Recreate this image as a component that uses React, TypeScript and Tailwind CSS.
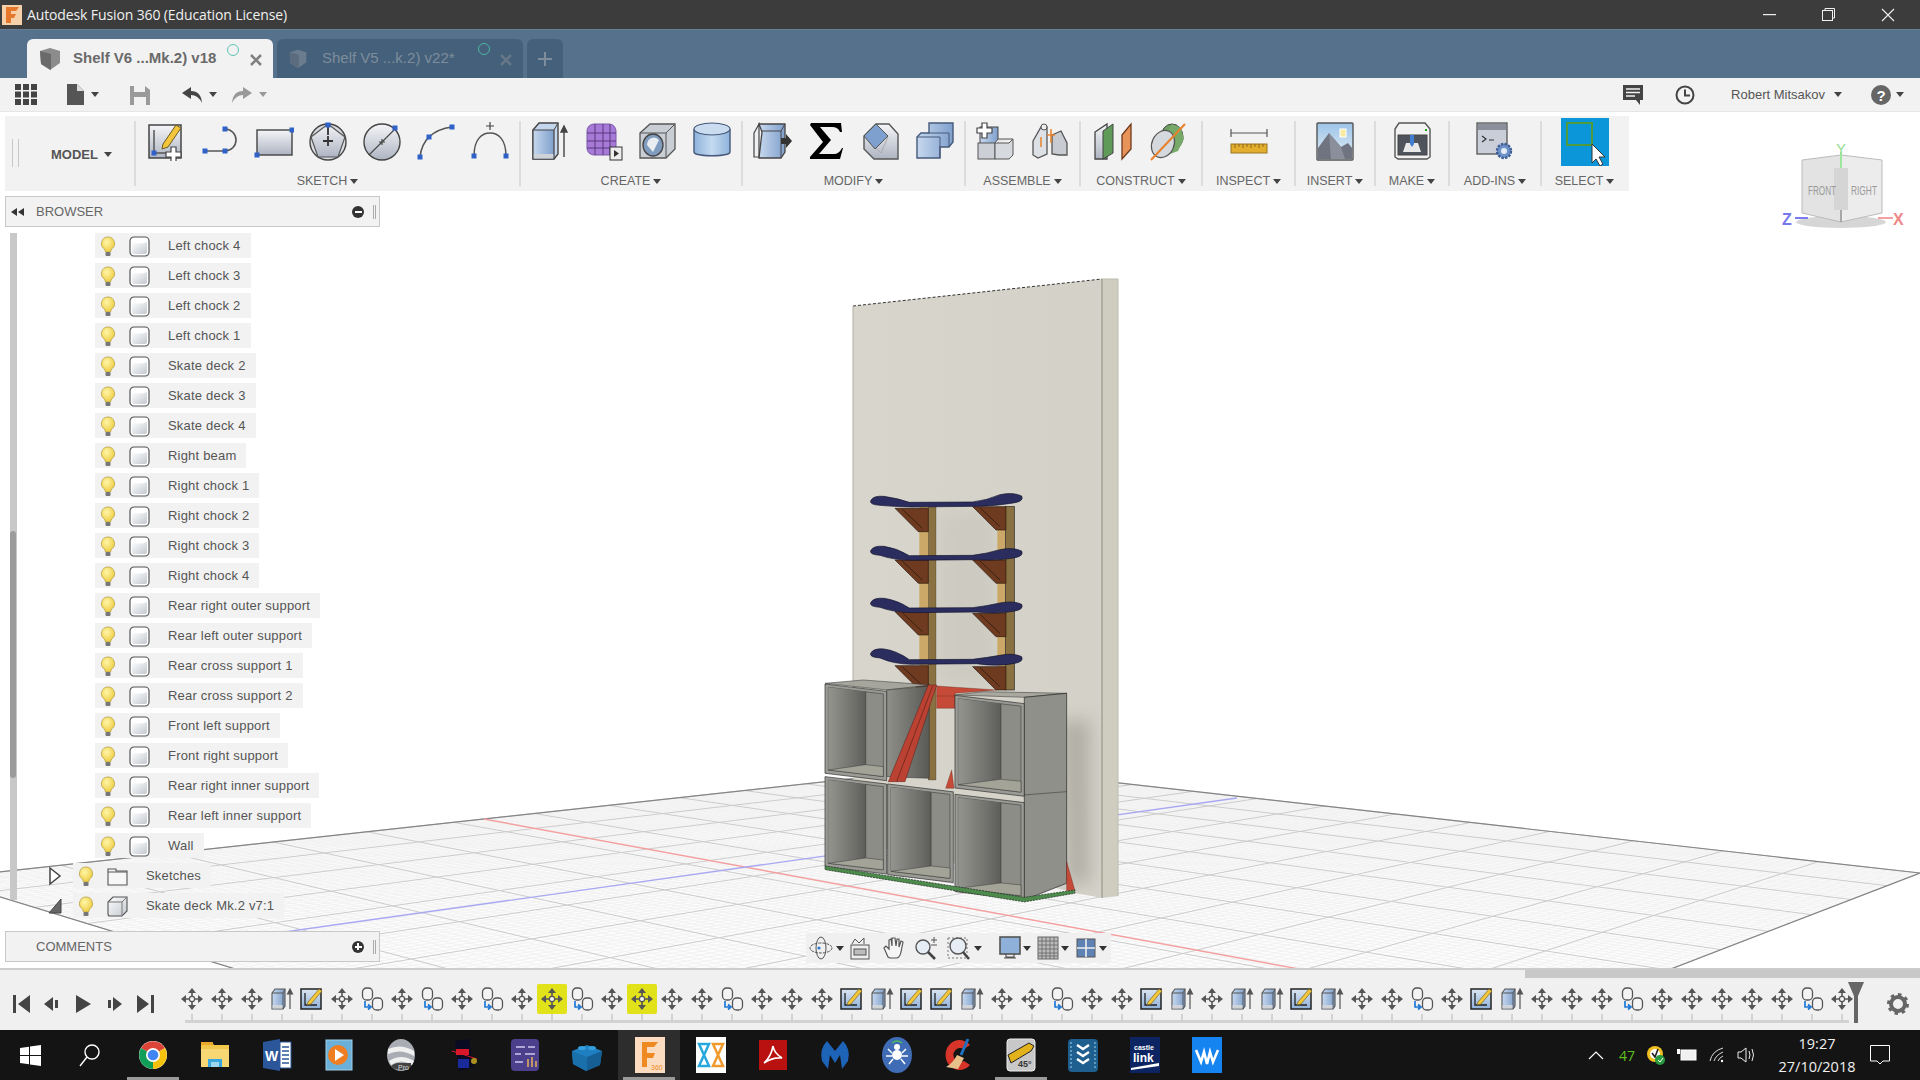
import React from "react";

const Caret = ({ c = "#555" }: { c?: string }) => (
  <svg width="8" height="5" viewBox="0 0 8 5" className="shrink-0"><path d="M0 0H8L4 5Z" fill={c} /></svg>
);

const Blue = "#2f62c8";
const Dot = ({ x, y }: { x: number; y: number }) => <rect x={x - 2.5} y={y - 2.5} width="5" height="5" fill={Blue} />;

const I40 = ({ children }: { children: React.ReactNode }) => (
  <svg width="40" height="40" viewBox="0 0 40 40" className="shrink-0">{children}</svg>
);

const icons: Record<string, React.ReactNode> = {
  sketch: (
    <I40>
      <rect x="3" y="4" width="32" height="33" fill="url(#gGray)" stroke="#444" strokeWidth="1.5" />
      <path d="M8 9V32H30" stroke="#555" fill="none" strokeWidth="1.5" />
      <path d="M17 23L30 4L35 7L22 26L16 28Z" fill="#f3c53a" stroke="#6a5a20" />
      <Dot x={8} y={32} />
      <path d="M25 26h5v5h5v5h-5v5h-5v-5h-5v-5h5z" fill="#fff" stroke="#444" strokeWidth="1.2" />
    </I40>
  ),
  line: (
    <I40>
      <path d="M5 30H25A11 11 0 0 0 25 8" fill="none" stroke="#555" strokeWidth="1.6" />
      <Dot x={5} y={30} /><Dot x={25} y={30} /><Dot x={25} y={8} />
    </I40>
  ),
  rect: (
    <I40>
      <rect x="3" y="9" width="35" height="25" fill="url(#gGray)" stroke="#444" strokeWidth="1.4" />
      <Dot x={3} y={34} /><Dot x={38} y={9} />
    </I40>
  ),
  poly: (
    <I40>
      <circle cx="20" cy="21" r="18" fill="#d8dbe2" stroke="#444" strokeWidth="1.4" />
      <path d="M20 3L37 16L30 36H10L3 16Z" fill="url(#gGray)" stroke="#555" strokeWidth="1.2" />
      <path d="M20 3V14M15 20H25M20 15V25" stroke="#333" strokeWidth="1.8" />
      <Dot x={20} y={4} />
    </I40>
  ),
  circle: (
    <I40>
      <circle cx="20" cy="21" r="18" fill="url(#gGray)" stroke="#444" strokeWidth="1.4" />
      <path d="M7 34L33 8M17 21H23M20 18V24" stroke="#444" strokeWidth="1.1" fill="none" />
      <Dot x={33} y={7} />
    </I40>
  ),
  arc: (
    <I40>
      <path d="M4 36Q7 10 36 6" fill="none" stroke="#555" strokeWidth="1.6" />
      <Dot x={4} y={36} /><Dot x={13} y={16} /><Dot x={36} y={6} />
    </I40>
  ),
  spline: (
    <I40>
      <path d="M4 35C4 18 12 12 20 12C28 12 36 18 36 35" fill="none" stroke="#555" strokeWidth="1.5" />
      <path d="M20 1V9M16 5H24" stroke="#444" strokeWidth="1.2" />
      <Dot x={4} y={35} /><Dot x={36} y={35} />
    </I40>
  ),
  extrude: (
    <I40>
      <path d="M3 9L9 2H28V33L24 38H3Z" fill="#c3d6ec" stroke="#444" strokeWidth="1.4" />
      <path d="M3 9H24V38H3Z" fill="url(#gBlue)" stroke="#444" strokeWidth="1.2" />
      <path d="M24 9L28 2" stroke="#444" />
      <rect x="3.8" y="33" width="19.5" height="4.5" fill="#cfd3d8" />
      <path d="M34 36V9M31 11L34 5L37 11Z" stroke="#444" fill="#444" strokeWidth="1.4" />
    </I40>
  ),
  form: (
    <I40>
      <rect x="3" y="3" width="29" height="31" rx="7" fill="#a77ad8" stroke="#7b58a8" />
      <path d="M3 12H32M3 20H32M3 27H32M11 3V34M19 3V34M26 3V34" stroke="#59397f" strokeWidth="1" />
      <rect x="26" y="26" width="12" height="13" fill="#eee" stroke="#333" />
      <path d="M30 29L35 32.5L30 36Z" fill="#333" />
    </I40>
  ),
  hole: (
    <I40>
      <path d="M2 12L12 3H37V28L28 37H2Z" fill="#c9cdd4" stroke="#555" strokeWidth="1.3" />
      <path d="M2 12H28V37" fill="none" stroke="#555" />
      <path d="M28 12L37 3" stroke="#555" />
      <ellipse cx="15" cy="24" rx="10" ry="11" fill="#7f9bbd" stroke="#444" strokeWidth="1.3" />
      <path d="M9 24a7 8 0 0 1 12 -5l-6 12z" fill="#e8edf2" />
    </I40>
  ),
  cyl: (
    <I40>
      <path d="M2 9V31C2 36 38 36 38 31V9Z" fill="url(#gCyl)" stroke="#46597a" strokeWidth="1.4" />
      <ellipse cx="20" cy="8" rx="18" ry="6" fill="#c9dcf0" stroke="#46597a" strokeWidth="1.2" />
    </I40>
  ),
  press: (
    <I40>
      <path d="M1 12L6 3V36H1Z" fill="#eef0f2" stroke="#444" strokeWidth="1.2" />
      <path d="M6 3H32V31L28 37H6L9 11Z" fill="url(#gBlue)" stroke="#444" strokeWidth="1.3" />
      <path d="M9 10H28V37" fill="none" stroke="#444" />
      <path d="M28 10L32 3" stroke="#444" />
      <path d="M28 17H33V13L39 20L33 27V23H28Z" fill="#333" />
    </I40>
  ),
  sigma: (
    <I40>
      <path d="M4 2H34L35 11H33Q31 6 25 6H13L24 19L12 33H27Q32 33 35 27H36L33 38H3V36L16 21L3 4Z" fill="#000" />
    </I40>
  ),
  chamfer: (
    <I40>
      <path d="M3 15L15 3H28L37 13V38H13L3 28Z" fill="url(#gGray)" stroke="#555" strokeWidth="1.4" />
      <path d="M3 15L20 32M15 3L27 16L20 32" fill="none" stroke="#aaa" />
      <path d="M15 3L27 15L14 28L3 15Z" fill="#7ea0cf" stroke="#555" />
    </I40>
  ),
  combine: (
    <I40>
      <path d="M14 2H38V21L34 26H25V37H2V16L6 12H14Z" fill="url(#gBlue)" stroke="#46597a" strokeWidth="1.4" />
      <path d="M14 12H34V26M2 16H25V37" fill="none" stroke="#46597a" />
    </I40>
  ),
  comp: (
    <I40>
      <rect x="4" y="6" width="18" height="17" fill="url(#gBlue)" stroke="#444" />
      <rect x="2" y="22" width="17" height="16" fill="#ccd0d6" stroke="#555" />
      <path d="M19 22H33L37 18V34L33 38H19Z" fill="#d6d9de" stroke="#555" />
      <path d="M19 22L22 18H37" fill="#e6e6e6" stroke="#555" />
      <path d="M6 2h5v5h5v5h-5v5h-5v-5h-5v-5h5z" fill="#fff" stroke="#444" strokeWidth="1.2" />
    </I40>
  ),
  joint: (
    <I40>
      <path d="M3 20L11 6H17V33L8 37L3 34Z" fill="#dde0e4" stroke="#555" strokeWidth="1.3" />
      <path d="M22 14L31 10L37 22V34H29L22 33Z" fill="#c8ccd2" stroke="#555" strokeWidth="1.3" />
      <circle cx="14" cy="6" r="3" fill="#eee" stroke="#555" />
      <path d="M11 16V26M21 8V22" stroke="#e8812a" strokeWidth="1.5" />
      <path d="M17 14H25" stroke="#e8812a" strokeWidth="1.4" />
    </I40>
  ),
  plane: (
    <I40>
      <path d="M1 11L13 3V38H1Z" fill="url(#gGray)" stroke="#444" strokeWidth="1.3" />
      <path d="M9 10L19 3V32L9 38Z" fill="#5f9a58" stroke="#444" />
      <path d="M28 14L37 3V28L28 38Z" fill="#e8935a" stroke="#6e3a1e" strokeWidth="1.3" />
    </I40>
  ),
  axis: (
    <I40>
      <ellipse cx="24" cy="16" rx="11" ry="13" fill="#6fa063" stroke="#444" />
      <path d="M24 3L33 7L36 18L30 30L14 36L10 28Z" fill="#77aa68" />
      <ellipse cx="15" cy="23" rx="11" ry="14" transform="rotate(25 15 23)" fill="#d5d8dc" stroke="#555" strokeWidth="1.2" />
      <path d="M3 39L37 3" stroke="#e8812a" strokeWidth="2" />
    </I40>
  ),
  ruler: (
    <I40>
      <path d="M2 12H38M2 8V16M38 8V16" stroke="#555" strokeWidth="1.2" />
      <rect x="2" y="23" width="36" height="9" fill="#e3ad2d" stroke="#9a7720" />
      <path d="M6 23v4M10 23v3M14 23v4M18 23v3M22 23v4M26 23v3M30 23v4M34 23v3" stroke="#8a6a18" />
    </I40>
  ),
  insert: (
    <I40>
      <rect x="2" y="2" width="36" height="37" rx="1" fill="url(#gSky)" stroke="#555" strokeWidth="1.4" />
      <rect x="25" y="8" width="6" height="8" fill="#f8eaa0" stroke="#fff" />
      <path d="M3 38V27L14 12L26 26L33 22L37 27V38Z" fill="#6f7480" />
      <path d="M14 12L26 26L30 38H16Z" fill="#8a8f9b" />
    </I40>
  ),
  make: (
    <I40>
      <path d="M3 8L7 2H33L38 8V36L35 38H6L3 36Z" fill="#f2f2f2" stroke="#555" strokeWidth="1.4" />
      <rect x="6" y="14" width="29" height="20" fill="#4f535b" stroke="#444" />
      <path d="M11 31L14 22H26L29 31Z" fill="#e8e8e8" />
      <path d="M18 14H22V23L20 26L18 23Z" fill="#3f7ed0" />
      <rect x="33" y="8" width="2" height="2" fill="#1aa01a" />
    </I40>
  ),
  addins: (
    <I40>
      <rect x="2" y="2" width="30" height="31" fill="#c9ced8" stroke="#555" strokeWidth="1.3" />
      <rect x="3" y="3" width="28" height="6" fill="#8a8f99" />
      <path d="M7 15L11 18L7 21M14 19H19" stroke="#333" fill="none" strokeWidth="1.2" />
      <circle cx="29" cy="30" r="7" fill="#6e93c9" stroke="#3d5f96" strokeWidth="2.4" strokeDasharray="2.5 1.2" />
      <circle cx="29" cy="30" r="3" fill="#e4ecf6" />
    </I40>
  ),
};

const groups: { label: string; w: number; icons: string[] }[] = [
  { label: "SKETCH", w: 383, icons: ["sketch", "line", "rect", "poly", "circle", "arc", "spline"] },
  { label: "CREATE", w: 220, icons: ["extrude", "form", "hole", "cyl"] },
  { label: "MODIFY", w: 221, icons: ["press", "sigma", "chamfer", "combine"] },
  { label: "ASSEMBLE", w: 113, icons: ["comp", "joint"] },
  { label: "CONSTRUCT", w: 120, icons: ["plane", "axis"] },
  { label: "INSPECT", w: 91, icons: ["ruler"] },
  { label: "INSERT", w: 78, icons: ["insert"] },
  { label: "MAKE", w: 72, icons: ["make"] },
  { label: "ADD-INS", w: 90, icons: ["addins"] },
];

const Group = ({ g }: { g: (typeof groups)[number] }) => (
  <>
    <div className="w-[2px] h-[65px] self-center bg-[#dcdcdc] shrink-0" />
    <div className="flex flex-col items-center shrink-0" {...{ style: { width: g.w } }}>
      <div className="flex justify-center gap-[14px] h-[40px] mt-[5px]">
        {g.icons.map((n, i) => <div key={i}>{icons[n]}</div>)}
      </div>
      <div className="flex items-center gap-[3px] mt-[13px] h-[15px] text-[12.5px] text-[#666]">
        {g.label}<Caret c="#444" />
      </div>
    </div>
  </>
);

const Bulb = () => (
  <svg width="16" height="22" viewBox="0 0 16 22" className="shrink-0 mt-[3px]">
    <path d="M8 1A6.5 6.5 0 0 0 4.5 13L5.5 16H10.5L11.5 13A6.5 6.5 0 0 0 8 1Z" fill="url(#gBulb)" stroke="#b8a14a" strokeWidth="0.8" />
    <rect x="5.5" y="16" width="5" height="4" rx="1" fill="#777" />
  </svg>
);

const BodyIcon = () => (
  <svg width="21" height="21" viewBox="0 0 21 21" className="shrink-0 mt-[1px]">
    <rect x="1" y="1" width="19" height="19" rx="4" fill="#fff" stroke="#555" strokeWidth="1.2" />
    <path d="M3 6Q10 9 18 6V16Q18 18 16 18H5Q3 18 3 16Z" fill="url(#gBody)" />
  </svg>
);

const Folder = () => (
  <svg width="21" height="21" viewBox="0 0 21 21" className="shrink-0 mt-[1px]">
    <path d="M1 3H9V5H20V19H1Z" fill="#f7f7f7" stroke="#555" strokeWidth="1.1" />
    <path d="M1 6H20" stroke="#555" />
  </svg>
);

const CompIcon = () => (
  <svg width="21" height="21" viewBox="0 0 21 21" className="shrink-0 mt-[1px]">
    <path d="M1 6L6 1H20V15L15 20H3Q1 20 1 18Z" fill="url(#gBody)" stroke="#555" strokeWidth="1.1" />
    <path d="M1 6H15V20M15 6L20 1" fill="none" stroke="#777" />
  </svg>
);

const items = [
  "Left chock 4", "Left chock 3", "Left chock 2", "Left chock 1", "Skate deck 2", "Skate deck 3", "Skate deck 4",
  "Right beam", "Right chock 1", "Right chock 2", "Right chock 3", "Right chock 4", "Rear right outer support",
  "Rear left outer support", "Rear cross support 1", "Rear cross support 2", "Front left support", "Front right support",
  "Rear right inner support", "Rear left inner support", "Wall",
];

const Row = ({ label, icon }: { label: string; icon: React.ReactNode }) => (
  <div className="flex items-center h-[25px] bg-[#f2f2f2] text-[13px] text-[#555] pr-[10px] w-fit">
    <div className="w-[26px] flex justify-center"><Bulb /></div>
    <div className="w-[21px] ml-[8px] flex justify-center">{icon}</div>
    <span className="ml-[18px] pt-[1px] tracking-[0.2px] whitespace-nowrap">{label}</span>
  </div>
);

/* ---------- timeline ---------- */
const Move = () => (
  <svg width="24" height="24" viewBox="0 0 24 24">
    <g fill="#555">
      <path d="M12 1L16 6H8Z" /><path d="M12 23L16 18H8Z" /><path d="M1 12L6 8V16Z" /><path d="M23 12L18 8V16Z" />
    </g>
    <path d="M12 5V9M12 15V19M5 12H9M15 12H19" stroke="#555" strokeWidth="1.6" />
    <circle cx="12" cy="12" r="2.6" fill="#f4f4f4" stroke="#555" strokeWidth="1.2" />
  </svg>
);
const JointT = () => (
  <svg width="24" height="24" viewBox="0 0 24 24">
    <rect x="2.5" y="1" width="10" height="12" rx="4" fill="#f4f4f4" stroke="#555" strokeWidth="1.3" />
    <rect x="12.5" y="11" width="10" height="12" rx="4" fill="#f4f4f4" stroke="#555" strokeWidth="1.3" />
    <path d="M5 14V20H10M8 17.5L11 20L8 22.5" stroke="#1f78d8" strokeWidth="1.7" fill="none" />
  </svg>
);
const SketchT = () => (
  <svg width="24" height="24" viewBox="0 0 24 24">
    <rect x="1" y="2" width="20" height="20" fill="url(#gBlueL)" stroke="#222" strokeWidth="1.5" />
    <path d="M5 6V18H17" stroke="#222" strokeWidth="1.3" fill="none" />
    <path d="M8 15L19 2L22 4L11 17L7 18Z" fill="#f3c53a" stroke="#7c6a22" strokeWidth="0.7" />
  </svg>
);
const ExtrudeT = () => (
  <svg width="24" height="24" viewBox="0 0 24 24">
    <path d="M2 6L5 2H15V19L13 22H2Z" fill="url(#gBlue)" stroke="#555" strokeWidth="1.1" />
    <path d="M2 6H13V22M13 6L15 2" fill="none" stroke="#555" />
    <rect x="2.5" y="18" width="10" height="3.5" fill="#d0d4d9" />
    <path d="M20 22V5M17.5 7L20 2L22.5 7Z" stroke="#555" fill="#555" strokeWidth="1.2" />
  </svg>
);
const seq = "m m m e s m j m j m j m M j m M m m j m m m s e s s e m m j m m s e m e e s e m m j m s e m m m j m m m m m j m".split(" ");
const Tl = ({ k }: { k: string }) => {
  if (k === "j") return <JointT />;
  if (k === "s") return <SketchT />;
  if (k === "e") return <ExtrudeT />;
  return <Move />;
};

/* ---------- 3D view ---------- */
function makeGrid() {
  const [x0, y0, x1, y1, x2, y2, x3, y3] = [-60, 878.5, 968, 766, 1920, 873, 1035, 1214];
  const dx1 = x1 - x2, dx2 = x3 - x2, sx = x0 - x1 + x2 - x3;
  const dy1 = y1 - y2, dy2 = y3 - y2, sy = y0 - y1 + y2 - y3;
  const den = dx1 * dy2 - dx2 * dy1;
  const g = (sx * dy2 - dx2 * sy) / den, h = (dx1 * sy - sx * dy1) / den;
  const a = x1 - x0 + g * x1, b = x3 - x0 + h * x3, c = x0;
  const d = y1 - y0 + g * y1, e = y3 - y0 + h * y3, f = y0;
  const P = (u: number, v: number) => {
    const w = g * u + h * v + 1;
    return [(a * u + b * v + c) / w, (d * u + e * v + f) / w];
  };
  const N = 130;
  const minor: string[] = [], major: string[] = [];
  for (let i = 0; i <= N; i++) {
    const t = i / N;
    const A = P(t, 0), B = P(t, 1), C = P(0, t), D = P(1, t);
    const s1 = `M${A[0].toFixed(1)} ${A[1].toFixed(1)}L${B[0].toFixed(1)} ${B[1].toFixed(1)}`;
    const s2 = `M${C[0].toFixed(1)} ${C[1].toFixed(1)}L${D[0].toFixed(1)} ${D[1].toFixed(1)}`;
    (i % 10 === 0 ? major : minor).push(s1, s2);
  }
  return { minor: minor.join(""), major: major.join(""), floor: `${x0},${y0} ${x1},${y1} ${x2},${y2} ${x3},${y3}` };
}
const grid = makeGrid();

const Deck = ({ l, m, r }: { l: number; m: number; r: number }) => (
  <path
    d={`M272 ${l}Q280 ${l - 16} 312 ${l - 13}Q350 ${l - 8} 388 ${m - 3}L578 ${m - 4}Q620 ${m - 9} 660 ${r - 11}Q700 ${r - 19} 725 ${r - 7}Q733 ${r + 9} 700 ${r + 14}Q650 ${r + 23} 590 ${m + 9}L395 ${m + 11}Q340 ${m + 10} 300 ${l + 14}Q268 ${l + 12} 272 ${l}Z`}
    fill="#2b2d5e" stroke="#14142e" strokeWidth="2"
  />
);
const Chock = ({ x, y }: { x: number; y: number }) => (
  <g>
    <path d={`M${x} ${y}H${x + 100}V${y + 70}H${x + 70}Z`} fill="#6e3a20" stroke="#2a1a10" strokeWidth="2" />
    <path d={`M${x + 22} ${y + 3}L${x + 82} ${y + 60}`} stroke="#3a2010" strokeWidth="3" />
  </g>
);
const Cell = ({ x, y, w, h }: { x: number; y: number; w: number; h: number }) => {
  const s = 0.12;
  const i = 10;
  const dr = w * s;
  const ix = x + i, iw = w - 2 * i, iy = y + i, ih = h - 2 * i;
  const bx = ix + iw * 0.68;
  return (
    <g>
      <path d={`M${x} ${y}L${x + w} ${y + dr}V${y + dr + h}L${x} ${y + h}Z`} fill="#9a9b95" stroke="#2c2c2c" strokeWidth="2" />
      <path d={`M${ix} ${iy}L${ix + iw} ${iy + iw * s}V${iy + iw * s + ih}L${ix} ${iy + ih}Z`} fill="#8c8d87" stroke="#333" strokeWidth="1.6" />
      <path d={`M${ix} ${iy}L${bx} ${iy + iw * 0.68 * s}V${iy + ih - 16}L${ix} ${iy + ih}Z`} fill="url(#gInner)" />
      <path d={`M${bx} ${iy + iw * 0.68 * s}V${iy + ih - 16}`} stroke="#333" strokeWidth="1.6" />
      <path d={`M${ix} ${iy + ih}L${bx} ${iy + ih - 16}L${ix + iw} ${iy + ih - 10}V${iy + ih + iw * s}Z`} fill="#a3a398" stroke="#333" strokeWidth="1.4" />
    </g>
  );
};

const Scene = () => (
  <svg viewBox="0 112 1920 856" width="1920" height="856" className="absolute inset-0">
    <defs>
      <filter id="soft" x="-100%" y="-50%" width="300%" height="200%"><feGaussianBlur stdDeviation="26" /></filter>
    </defs>
    <rect x="0" y="112" width="1920" height="856" fill="#fff" />
    <polygon points={grid.floor} fill="#fcfcfc" />
    <path d={grid.minor} stroke="#f2f2f2" strokeWidth="1" fill="none" />
    <path d={grid.major} stroke="#cbcbcb" strokeWidth="1" fill="none" />
    <polygon points={grid.floor} fill="none" stroke="#858585" strokeWidth="1.2" />
    <path d="M484 819L1500 1006" stroke="#f4a0a0" strokeWidth="1.4" />
    <path d="M100 958L1237 798" stroke="#a9a9f2" strokeWidth="1.4" />
    {/* wall */}
    <path d="M853 306L1102 279V898L1075 893L1025 880L853 840Z" fill="url(#gWall)" />
    <g transform="translate(780 460) scale(0.3333)">
      <path d="M840 780H930V1270H860Z" fill="#8e8c84" opacity="0.5" filter="url(#soft)" />
      <path d="M470 150H650V680H470Z" fill="#bdbbb1" opacity="0.35" filter="url(#soft)" />
    </g>
    <path d="M1102 279H1118V896L1102 898Z" fill="#cfcdc0" />
    <path d="M853 306L1102 279" stroke="#333" strokeWidth="1" strokeDasharray="3 2" />
    <path d="M1102 279V898" stroke="#8f8d80" />
    <path d="M853 306V690" stroke="#b0aea4" />
    <path d="M1102 279H1118V896" stroke="#bdbbad" fill="none" />
    <g transform="translate(780 460) scale(0.3333)">
      {/* posts */}
      <rect x="418" y="140" width="27" height="540" fill="#cba868" />
      <rect x="445" y="140" width="23" height="820" fill="#8a7142" stroke="#3a2f1a" />
      <rect x="652" y="140" width="25" height="550" fill="#cba868" />
      <rect x="677" y="140" width="26" height="550" fill="#8a7142" stroke="#222" strokeWidth="2" />
      {[[145, 140], [300, 300], [455, 460], [617, 620]].map(([a, b], i) => (
        <g key={i}><Chock x={345} y={a} /><Chock x={578} y={b} /></g>
      ))}
      <Deck l={122} m={130} r={115} />
      <Deck l={272} m={290} r={280} />
      <Deck l={428} m={447} r={440} />
      <Deck l={580} m={602} r={597} />
      {/* red braces */}
      <path d="M470 678L650 690L525 700V745H470Z" fill="#c54a38" stroke="#5a1f16" />
      <path d="M470 708H525" stroke="#5a1f16" />
      {/* boxes */}
      <path d="M135 670L250 660L450 675L320 690Z" fill="#a5a59c" stroke="#2c2c2c" strokeWidth="1.5" />
      <path d="M320 690L448 678V955L320 950Z" fill="url(#gSide)" stroke="#2c2c2c" strokeWidth="1.5" />
      <Cell x={135} y={672} w={185} h={268} />
      <Cell x={135} y={950} w={185} h={270} />
      <Cell x={323} y={972} w={197} h={272} />
      <path d="M445 675H470L375 965H325Z" fill="#bb4232" stroke="#5a1f16" strokeWidth="1.5" />
      <path d="M458 678L350 965" stroke="#5a1f16" strokeWidth="2" />
      <path d="M515 930L522 985H497Z" fill="#c54a38" stroke="#5a1f16" />
      <path d="M525 705L610 695L860 700L733 712Z" fill="#a8a89f" stroke="#2c2c2c" strokeWidth="1.5" />
      <path d="M733 712L860 700V1270L733 1320Z" fill="#8f908a" stroke="#222" strokeWidth="2" />
      <path d="M733 1005L860 995" stroke="#333" strokeWidth="1.6" />
      <Cell x={525} y={706} w={208} h={278} />
      <Cell x={525} y={1003} w={208} h={292} />
      <path d="M860 1205L885 1292H860Z" fill="#c54a38" stroke="#5a1f16" />
      <path d="M135 1218L733 1312L885 1290V1300L733 1326L135 1229Z" fill="#4c8b4c" stroke="#222" strokeWidth="2" strokeDasharray="6 3" />
    </g>
  </svg>
);

const ViewCube = () => (
  <svg width="140" height="100" viewBox="1780 135 140 100" className="absolute left-[1780px] top-[23px]">
    <ellipse cx="1841" cy="222" rx="45" ry="6" fill="#bbb" opacity="0.6" />
    <path d="M1802 160L1841 155V222L1802 213Z" fill="#e3e3e3" stroke="#bbb" />
    <path d="M1841 155L1882 160V213L1841 222Z" fill="#ececec" stroke="#bbb" />
    <path d="M1841 155V222" stroke="#999" strokeWidth="1.4" />
    <rect x="1834" y="168" width="14" height="42" fill="#d5d5d5" />
    <path d="M1841 152V168" stroke="#9de89d" strokeWidth="2" />
    <path d="M1795 218H1808" stroke="#7a7af0" strokeWidth="2" />
    <path d="M1878 218H1893" stroke="#f3a0a0" strokeWidth="2" />
    <text x="1808" y="195" fontSize="12" fill="#999" textLength="28" lengthAdjust="spacingAndGlyphs">FRONT</text>
    <text x="1851" y="195" fontSize="12" fill="#999" textLength="26" lengthAdjust="spacingAndGlyphs">RIGHT</text>
    <text x="1836" y="154" fontSize="15" fill="#8fe08f">Y</text>
    <text x="1782" y="225" fontSize="16" fontWeight="bold" fill="#7777ee">Z</text>
    <text x="1893" y="225" fontSize="16" fontWeight="bold" fill="#ee8888">X</text>
  </svg>
);

const NavIcon = ({ children, w = 24 }: { children: React.ReactNode; w?: number }) => (
  <svg width={w} height="24" viewBox={`0 0 ${w} 24`} className="shrink-0">{children}</svg>
);

const NavBar = () => (
  <div className="absolute left-[806px] bottom-[5px] w-[305px] h-[30px] bg-[#f0f0f0] flex items-center pl-[3px]">
    <div className="flex items-center w-[40px] gap-[3px]">
      <NavIcon><ellipse cx="12" cy="12" rx="5" ry="11" fill="none" stroke="#555" /><ellipse cx="12" cy="12" rx="11" ry="5" fill="none" stroke="#555" strokeDasharray="3 1" /><circle cx="10" cy="12" r="1.6" fill="#2f7ad0" /></NavIcon>
      <Caret c="#333" />
    </div>
    <div className="w-[33px]">
      <NavIcon><rect x="2" y="9" width="18" height="14" fill="#eee" stroke="#555" /><rect x="5" y="13" width="12" height="6" fill="#bbb" stroke="#555" /><path d="M3 8L6 3L10 7L15 2V8" fill="none" stroke="#555" /></NavIcon>
    </div>
    <div className="w-[32px]">
      <NavIcon><path d="M6 21L2 12L4 10L7 13V4L9 3L10 10V2H13L14 10L15 3H17L17 11L19 5L21 6L19 16Q18 21 15 22H8Z" fill="#f5f5f5" stroke="#555" strokeWidth="1.2" /></NavIcon>
    </div>
    <div className="w-[33px]">
      <NavIcon><circle cx="9" cy="11" r="7" fill="#e6edf5" stroke="#555" strokeWidth="1.4" /><path d="M14 16L21 23" stroke="#444" strokeWidth="2.6" /><path d="M20 1V7M17 4H23M17 9H23" stroke="#555" /></NavIcon>
    </div>
    <div className="flex items-center w-[51px] gap-[3px]">
      <NavIcon><rect x="1" y="2" width="19" height="20" fill="none" stroke="#777" strokeDasharray="2 2" /><circle cx="11" cy="10" r="8" fill="#e6edf5" stroke="#555" strokeWidth="1.4" /><path d="M16 16L22 23" stroke="#444" strokeWidth="2.6" /></NavIcon>
      <Caret c="#333" />
    </div>
    <div className="flex items-center w-[38px] gap-[1px]">
      <NavIcon><rect x="2" y="1" width="20" height="17" fill="#8fb0d8" stroke="#555" strokeWidth="1.6" /><path d="M8 18V21H16V18M6 22H18" stroke="#555" strokeWidth="1.2" fill="none" /></NavIcon>
      <Caret c="#333" />
    </div>
    <div className="flex items-center w-[38px] gap-[1px]">
      <NavIcon><rect x="2" y="1" width="20" height="22" fill="#bbb" stroke="#666" /><path d="M6 1V23M10 1V23M14 1V23M18 1V23M2 5H22M2 9H22M2 13H22M2 17H22M2 20H22" stroke="#666" strokeWidth="0.8" /></NavIcon>
      <Caret c="#333" />
    </div>
    <div className="flex items-center gap-[1px]">
      <NavIcon><rect x="3" y="3" width="18" height="18" fill="#5f82b5" stroke="#555" /><path d="M12 3V21M3 12H21" stroke="#eee" strokeWidth="1.6" /></NavIcon>
      <Caret c="#333" />
    </div>
  </div>
);

/* ---------- taskbar icons ---------- */
const T = ({ children }: { children: React.ReactNode }) => (
  <svg width="32" height="36" viewBox="0 0 32 36">{children}</svg>
);
const taskIcons: React.ReactNode[] = [
  <T><circle cx="16" cy="18" r="14" fill="#fff" /><path d="M16 18L4 11A14 14 0 0 1 28 11Z" fill="#db4437" /><path d="M16 18L28 11A14 14 0 0 1 16 32Z" fill="#f4c20d" /><path d="M16 18L16 32A14 14 0 0 1 4 11Z" fill="#0f9d58" /><circle cx="16" cy="18" r="7" fill="#fff" /><circle cx="16" cy="18" r="5.3" fill="#4285f4" /></T>,
  <T><path d="M2 5H13L15 8H30V30H2Z" fill="#f3c64c" /><rect x="2" y="5" width="12" height="3" fill="#e9a92b" /><path d="M2 12H30V30H2Z" fill="#f7d774" /><path d="M9 22H23V30H9Z" fill="#3aa7de" /><path d="M12 25H20V30H12Z" fill="#9ed6ef" /></T>,
  <T><path d="M2 5L19 2V34L2 31Z" fill="#2b579a" /><rect x="19" y="5" width="11" height="26" fill="#fff" stroke="#2b579a" /><path d="M21 10H28M21 14H28M21 18H28M21 22H28M21 26H28" stroke="#2b579a" strokeWidth="1.5" /><text x="4" y="24" fontSize="14" fontWeight="bold" fill="#fff" fontFamily="Liberation Sans">W</text></T>,
  <T><rect x="3" y="3" width="26" height="30" fill="#6ab0d8" stroke="#9fd0ea" /><circle cx="15" cy="18" r="10" fill="#ef7d22" /><path d="M12 12L21 18L12 24Z" fill="#fff" /></T>,
  <T><ellipse cx="16" cy="18" rx="14" ry="16" fill="#a9adb3" /><path d="M3 12Q16 6 29 14L29 19Q16 11 3 17ZM4 24Q16 16 29 24L27 28Q16 21 6 28Z" fill="#f0f0f0" /><path d="M6 30Q16 36 26 30V26H14Q8 26 6 30Z" fill="#444" /><text x="13" y="33" fontSize="7" fill="#ddd" fontFamily="Liberation Sans">Pro</text></T>,
  <T><path d="M8 4L22 2L26 30L12 34Z" fill="#0a0a22" /><rect x="9" y="12" width="13" height="6" fill="#d8182a" /><rect x="11" y="22" width="11" height="9" fill="#1a2a9a" /><path d="M5 14L30 22" stroke="#d8182a" /><circle cx="27" cy="24" r="3" fill="#a99020" /></T>,
  <T><rect x="2" y="2" width="28" height="32" rx="4" fill="#4c3f8c" /><path d="M7 10H16M19 10H26M6 17H12M16 17H26M6 25H14" stroke="#cfc6ee" strokeWidth="1.5" /><path d="M19 22V30M23 20V30M27 24V30" stroke="#e8b35a" strokeWidth="1.5" /></T>,
  <T><path d="M16 8L31 14L29 28L15 34L2 27L1 14Z" fill="#1f7fc0" /><path d="M16 20L31 14L29 28L15 34Z" fill="#155f95" /><path d="M1 14L16 20V34L2 27Z" fill="#1a70ab" /><ellipse cx="11" cy="11" rx="4" ry="2" fill="#35a0e0" /><ellipse cx="21" cy="11" rx="4" ry="2" fill="#35a0e0" /></T>,
  <T><rect x="2" y="0" width="30" height="36" fill="#fbdcc0" /><path d="M9 5H25L21 10H14V16H22L20 21H14V30H9Z" fill="#ef8a23" /><text x="18" y="33" fontSize="7" fill="#ef8a23" fontFamily="Liberation Sans">360</text></T>,
  <T><rect x="1" y="0" width="30" height="36" fill="#fff" /><path d="M4 7H14L9 18L14 29H4L9 18Z" fill="none" stroke="#27a8dc" strokeWidth="2.5" /><path d="M28 7H18L23 18L18 29H28L23 18Z" fill="none" stroke="#f09a2e" strokeWidth="2.5" /></T>,
  <T><rect x="2" y="3" width="28" height="30" fill="#b8110f" /><path d="M7 26Q14 20 16 9Q17 16 25 21Q16 20 7 26Z" fill="none" stroke="#fff" strokeWidth="1.6" /></T>,
  <T><path d="M8 4L16 14L24 4Q32 12 29 24L23 32L21 18L16 26L11 18L9 32L3 24Q0 12 8 4Z" fill="#1d63b8" /></T>,
  <T><ellipse cx="16" cy="18" rx="15" ry="18" fill="#3f6cb5" /><circle cx="16" cy="18" r="5" fill="#fff" /><circle cx="16" cy="10" r="3" fill="#fff" /><path d="M7 12L11 16M25 12L21 16M5 19H11M27 19H21M8 27L12 22M24 27L20 22" stroke="#fff" strokeWidth="1.5" /><path d="M11 6Q16 2 21 6" stroke="#4dbb60" fill="none" strokeWidth="1.5" /></T>,
  <T><path d="M27 8A14 15 0 1 0 27 28L21 24A7 7 0 1 1 21 12Z" fill="#d8352a" /><path d="M25 2L18 18" stroke="#1f70c0" strokeWidth="3" /><path d="M14 18L21 21L15 32L3 30Q10 26 14 18Z" fill="#e8c18a" /></T>,
  <T><rect x="2" y="2" width="28" height="32" rx="3" fill="#c8c8c8" stroke="#eee" /><path d="M3 18L24 6L29 9L26 14L6 26Z" fill="#e2b21d" stroke="#222" /><text x="13" y="30" fontSize="9" fontWeight="bold" fill="#333" fontFamily="Liberation Sans">45°</text></T>,
  <T><rect x="1" y="2" width="30" height="33" rx="4" fill="#1f5f8f" /><path d="M10 8L16 12L22 8M10 15L16 19L22 15M10 22L16 26L22 22" stroke="#fff" fill="none" strokeWidth="2.4" /><path d="M4 5V32M28 5V32" stroke="#5f9ac2" strokeWidth="2" strokeDasharray="2 2" /></T>,
  <T><rect x="1" y="0" width="30" height="36" fill="#0c2462" /><text x="5" y="13" fontSize="7" fontWeight="bold" fill="#fff" fontFamily="Liberation Sans">castle</text><text x="4" y="25" fontSize="12" fontWeight="bold" fill="#fff" fontFamily="Liberation Sans">link</text><path d="M2 31L30 26V29L2 33Z" fill="#fff" /></T>,
  <T><rect x="1" y="0" width="30" height="36" fill="#1583f0" /><path d="M5 13L10 25L13 15L16 27L19 15L22 25L27 13" stroke="#fff" strokeWidth="2.6" fill="none" /></T>,
];
const taskSpecial = [8];
const underlined = [0, 8, 14];

export default function App() {
  return (
    <div className="w-[1920px] h-[1080px] overflow-hidden flex flex-col bg-white font-['Liberation_Sans',Arial,sans-serif]">
      <svg className="absolute w-0 h-0">
        <defs>
          <linearGradient id="gGray" x1="0" y1="0" x2="0" y2="1"><stop offset="0" stopColor="#f4f5f7" /><stop offset="1" stopColor="#aeb4c2" /></linearGradient>
          <linearGradient id="gBlue" x1="0" y1="0" x2="1" y2="0"><stop offset="0" stopColor="#c6d8ee" /><stop offset="1" stopColor="#7f9fcc" /></linearGradient>
          <linearGradient id="gBlueL" x1="0" y1="0" x2="0" y2="1"><stop offset="0" stopColor="#dbe6f2" /><stop offset="1" stopColor="#8fb0d8" /></linearGradient>
          <linearGradient id="gCyl" x1="0" y1="0" x2="1" y2="0"><stop offset="0" stopColor="#8fb3dc" /><stop offset="0.5" stopColor="#c4daf0" /><stop offset="1" stopColor="#8fb3dc" /></linearGradient>
          <linearGradient id="gSky" x1="0" y1="0" x2="0" y2="1"><stop offset="0" stopColor="#9cc4ea" /><stop offset="1" stopColor="#e6eef2" /></linearGradient>
          <radialGradient id="gBulb" cx="0.4" cy="0.35" r="0.7"><stop offset="0" stopColor="#fff6a8" /><stop offset="1" stopColor="#ecca3c" /></radialGradient>
          <linearGradient id="gBody" x1="0" y1="0" x2="1" y2="1"><stop offset="0" stopColor="#fff" /><stop offset="1" stopColor="#c3c8cf" /></linearGradient>
          <linearGradient id="gWall" x1="0" y1="0" x2="1" y2="0"><stop offset="0" stopColor="#d8d6cc" /><stop offset="1" stopColor="#d4d2c8" /></linearGradient>
          <linearGradient id="gInner" x1="0" y1="0" x2="1" y2="0"><stop offset="0" stopColor="#93948e" /><stop offset="0.75" stopColor="#6c6d68" /><stop offset="1" stopColor="#5c5c58" /></linearGradient>
          <linearGradient id="gSide" x1="0" y1="0" x2="1" y2="0"><stop offset="0" stopColor="#8f908a" /><stop offset="1" stopColor="#595a55" /></linearGradient>
        </defs>
      </svg>

      {/* title bar */}
      <div className="h-[29px] shrink-0 bg-[#3c3c3c] flex items-center relative">
        <div className="ml-[2px] w-[20px] h-[20px] bg-[#f6d0a8] flex items-center justify-center">
          <svg width="16" height="18" viewBox="0 0 16 18"><path d="M2 1H15L12 5H7V8H12L10 12H7V17H2Z" fill="#e5782a" /></svg>
        </div>
        <span className="ml-[5px] text-[14px] text-[#f0f0f0] font-['Open_Sans',sans-serif] tracking-[-0.12px] whitespace-nowrap">Autodesk Fusion 360 (Education License)</span>
        <div className="ml-auto mr-[3px] flex items-center">
          <div className="w-[59px] flex justify-center"><svg width="13" height="2"><rect width="13" height="1.2" fill="#f0f0f0" /></svg></div>
          <div className="w-[59px] flex justify-center"><svg width="13" height="13" viewBox="0 0 13 13"><path d="M3 2.5V.5H12.5V10H10.5" fill="none" stroke="#f0f0f0" /><rect x=".5" y="2.5" width="10" height="10" fill="none" stroke="#f0f0f0" /></svg></div>
          <div className="w-[59px] flex justify-center"><svg width="14" height="14" viewBox="0 0 14 14"><path d="M1 1L13 13M13 1L1 13" stroke="#f0f0f0" strokeWidth="1.1" /></svg></div>
        </div>
      </div>

      {/* tabs */}
      <div className="h-[49px] shrink-0 bg-[#56718c] border-t border-[#647d95] flex items-end pl-[27px] gap-[4px]">
        <div className="w-[246px] h-[39px] bg-[#f2f2f2] rounded-t-[6px] flex items-center relative">
          <svg width="24" height="24" viewBox="0 0 24 24" className="ml-[11px]"><path d="M2 4L12 1L22 4V16L12 23L3 17Z" fill="#8c8c8c" /><path d="M2 4L13 7V23L3 17Z" fill="#6a6a6a" /></svg>
          <span className="ml-[11px] text-[15px] font-bold text-[#6a6a6a] whitespace-nowrap">Shelf V6 ...Mk.2) v18</span>
          <span className="absolute left-[200px] top-[5px] w-[12px] h-[12px] rounded-full border-[1.5px] border-[#5fc4b4]" />
          <svg width="12" height="12" viewBox="0 0 12 12" className="absolute left-[223px] top-[15px]"><path d="M1 1L11 11M11 1L1 11" stroke="#808080" strokeWidth="2.6" /></svg>
        </div>
        <div className="w-[246px] h-[39px] bg-[#45607a] rounded-t-[6px] flex items-center relative">
          <svg width="20" height="20" viewBox="0 0 24 24" className="ml-[11px]"><path d="M2 4L12 1L22 4V16L12 23L3 17Z" fill="#6a7d8e" /><path d="M2 4L13 7V23L3 17Z" fill="#5a6c7d" /></svg>
          <span className="ml-[14px] text-[15px] text-[#7d8d9c] whitespace-nowrap">Shelf V5 ...k.2) v22*</span>
          <span className="absolute left-[201px] top-[4px] w-[12px] h-[12px] rounded-full border-[1.5px] border-[#4fb4a4]" />
          <svg width="12" height="12" viewBox="0 0 12 12" className="absolute left-[223px] top-[15px]"><path d="M1 1L11 11M11 1L1 11" stroke="#667888" strokeWidth="2.6" /></svg>
        </div>
        <div className="w-[36px] h-[39px] bg-[#45607a] rounded-t-[6px] flex items-center justify-center">
          <svg width="14" height="14" viewBox="0 0 14 14"><path d="M7 0V14M0 7H14" stroke="#7d8d9c" strokeWidth="2" /></svg>
        </div>
      </div>

      {/* quick toolbar */}
      <div className="h-[34px] shrink-0 bg-[#f2f2f2] border-b border-[#e6e6e6] flex items-center relative z-10">
        <svg width="22" height="21" viewBox="0 0 22 21" className="ml-[15px]" fill="#444"><rect width="6" height="6" /><rect x="8" width="6" height="6" /><rect x="16" width="6" height="6" /><rect y="7.5" width="6" height="6" /><rect x="8" y="7.5" width="6" height="6" /><rect x="16" y="7.5" width="6" height="6" /><rect y="15" width="6" height="6" /><rect x="8" y="15" width="6" height="6" /><rect x="16" y="15" width="6" height="6" /></svg>
        <svg width="17" height="21" viewBox="0 0 17 21" className="ml-[30px]"><path d="M0 0H10L17 7V21H0Z" fill="#555" /><path d="M10 0V7H17" fill="#ddd" /></svg>
        <div className="ml-[7px]"><Caret c="#444" /></div>
        <svg width="20" height="21" viewBox="0 0 20 21" className="ml-[31px]"><path d="M0 2H15L20 6V21H0Z" fill="#9a9a9a" /><rect x="4" y="2" width="11" height="6" fill="#f2f2f2" /><rect x="4" y="13" width="12" height="8" fill="#f2f2f2" /></svg>
        <svg width="20" height="16" viewBox="0 0 20 16" className="ml-[32px]"><path d="M9 0L0 6L9 12V8Q16 8 20 16Q19 4 9 4Z" fill="#444" /></svg>
        <div className="ml-[7px]"><Caret c="#444" /></div>
        <svg width="20" height="16" viewBox="0 0 20 16" className="ml-[15px]"><path d="M11 0L20 6L11 12V8Q4 8 0 16Q1 4 11 4Z" fill="#999" /></svg>
        <div className="ml-[7px]"><Caret c="#999" /></div>
        <div className="ml-auto flex items-center">
          <svg width="20" height="20" viewBox="0 0 20 20"><path d="M0 0H20V15H17V20L13 15H0Z" fill="#444" /><path d="M3 4H17M3 7.5H17M3 11H12" stroke="#f2f2f2" strokeWidth="1.4" /></svg>
          <svg width="20" height="20" viewBox="0 0 20 20" className="ml-[32px]"><circle cx="10" cy="10" r="8.5" fill="none" stroke="#444" strokeWidth="2" /><path d="M10 4.5V10.5H15" fill="none" stroke="#444" strokeWidth="2" /></svg>
          <span className="ml-[36px] text-[13px] text-[#555] whitespace-nowrap">Robert Mitsakov</span>
          <div className="ml-[9px]"><Caret c="#444" /></div>
          <svg width="20" height="20" viewBox="0 0 20 20" className="ml-[29px]"><circle cx="10" cy="10" r="10" fill="#666" /><text x="10" y="15.5" textAnchor="middle" fontSize="15" fontWeight="bold" fill="#fff">?</text></svg>
          <div className="ml-[5px] mr-[16px]"><Caret c="#444" /></div>
        </div>
      </div>

      {/* main */}
      <div className="relative h-[856px] shrink-0">
        <Scene />
        <ViewCube />
        <div className="relative flex flex-col">
          {/* ribbon */}
          <div className="ml-[5px] mt-[4px] w-[1624px] h-[75px] bg-[#f2f2f2] flex items-start">
            <div className="w-[129px] h-[75px] flex items-center shrink-0">
              <div className="ml-[7px] w-[7px] h-[28px] border-x border-[#c8c8c8] mb-[2px]" />
              <span className="ml-[32px] text-[13px] font-bold text-[#555] mt-[2px]">MODEL</span>
              <div className="ml-[6px] mt-[2px]"><Caret c="#444" /></div>
            </div>
            {groups.map((g, i) => <Group key={i} g={g} />)}
            <div className="w-[2px] h-[65px] self-center bg-[#dcdcdc] shrink-0" />
            <div className="w-[85px] flex flex-col items-center shrink-0">
              <div className="w-[48px] h-[48px] mt-[2px] bg-[#0a96d8] relative">
                <svg width="48" height="48" viewBox="0 0 48 48" className="absolute inset-0">
                  <rect x="6" y="5" width="25" height="22" fill="none" stroke="#4f9a3a" strokeWidth="2" />
                  <path d="M31 26V45L35 41L39 48L42 46L38 39H44Z" fill="#fff" stroke="#333" />
                </svg>
              </div>
              <div className="flex items-center gap-[3px] mt-[8px] h-[15px] text-[12.5px] text-[#666]">SELECT<Caret c="#444" /></div>
            </div>
          </div>

          {/* browser */}
          <div className="ml-[5px] mt-[5px] w-[375px] h-[31px] bg-[#f2f2f2] border border-[#c8c8c8] flex items-center">
            <svg width="13" height="8" viewBox="0 0 13 8" className="ml-[5px]"><path d="M6 0L0 4L6 8ZM13 0L7 4L13 8Z" fill="#333" /></svg>
            <span className="ml-[12px] text-[13px] text-[#666]">BROWSER</span>
            <div className="ml-auto w-[12px] h-[12px] rounded-full bg-[#333] flex items-center justify-center"><div className="w-[7px] h-[2px] bg-white" /></div>
            <div className="ml-[9px] mr-[3px] w-[3px] h-[14px] border-x border-[#aaa]" />
          </div>
          <div className="flex mt-[6px]">
            <div className="ml-[10px] w-[7px] h-[667px] bg-[#c8c8c8] flex flex-col shrink-0">
              <div className="mt-[298px] h-[247px] w-[6px] rounded-[3px] bg-[#9c9c9c]" />
            </div>
            <div className="flex flex-col gap-[5px]">
              {items.map((t) => (
                <div key={t} className="ml-[78px]"><Row label={t} icon={<BodyIcon />} /></div>
              ))}
              <div className="flex items-center ml-[31px]">
                <svg width="14" height="20" viewBox="0 0 14 20" className="mr-[11px]"><path d="M2 2L12 10L2 18Z" fill="#fff" stroke="#444" strokeWidth="1.5" /></svg>
                <Row label="Sketches" icon={<Folder />} />
              </div>
              <div className="flex items-center ml-[31px]">
                <svg width="14" height="20" viewBox="0 0 14 20" className="mr-[11px]"><path d="M13 3V17H1Z" fill="#666" stroke="#444" /></svg>
                <Row label="Skate deck Mk.2 v7:1" icon={<CompIcon />} />
              </div>
            </div>
          </div>

          {/* comments */}
          <div className="ml-[5px] mt-[13px] w-[375px] h-[31px] bg-[#f2f2f2] border border-[#c8c8c8] flex items-center">
            <span className="ml-[30px] text-[13px] text-[#666]">COMMENTS</span>
            <div className="ml-auto w-[12px] h-[12px] rounded-full bg-[#333] flex items-center justify-center relative">
              <div className="w-[7px] h-[2px] bg-white" /><div className="absolute w-[2px] h-[7px] bg-white" />
            </div>
            <div className="ml-[9px] mr-[3px] w-[3px] h-[14px] border-x border-[#aaa]" />
          </div>
        </div>
        <NavBar />
      </div>

      {/* timeline */}
      <div className="h-[62px] shrink-0 bg-[#f0f0f0] border-t-2 border-[#cccccc] relative flex items-start">
        <div className="absolute right-0 top-0 w-[395px] h-[8px] bg-[#c8c8c8]" />
        <div className="flex items-center w-[177px] h-[40px] mt-[14px] pl-[12px] gap-[13px] shrink-0">
          {[
            "M1 0H4V18H1ZM18 0V18L6 9Z",
            "M10 2V16L1 9ZM12 5H15V13H12Z",
            "M2 0L17 9L2 18Z",
            "M8 2V16L17 9ZM3 5H6V13H3Z",
            "M15 0H18V18H15ZM1 0V18L13 9Z",
          ].map((d, i) => (
            <svg key={i} width="18" height="18" viewBox="0 0 18 18" className="shrink-0"><path d={d} fill="#444" /></svg>
          ))}
        </div>
        <div className="relative flex mt-[14px] shrink-0">
          <div className="absolute left-[8px] right-[8px] top-[36px] h-[3px] bg-[#d2d2d2]" />
          {seq.map((k, i) => (
            <div key={i} className="w-[30px] flex flex-col items-center shrink-0">
              <div className={k === "M" ? "w-[30px] h-[30px] rounded-[2px] bg-[#e2e21a] flex items-center justify-center" : "w-[30px] h-[30px] flex items-center justify-center"}>
                <Tl k={k} />
              </div>
              <div className="w-[2px] h-[6px] bg-[#d2d2d2]" />
            </div>
          ))}
        </div>
        <svg width="18" height="42" viewBox="0 0 18 42" className="absolute left-[1848px] top-[12px]"><path d="M0 0H16L10 14V41H6V14Z" fill="#666" /></svg>
        <svg width="22" height="22" viewBox="0 0 22 22" className="absolute left-[1887px] top-[23px]">
          <circle cx="11" cy="11" r="7" fill="none" stroke="#666" strokeWidth="4" />
          <circle cx="11" cy="11" r="9.5" fill="none" stroke="#666" strokeWidth="3" strokeDasharray="3.5 3.9" />
        </svg>
      </div>

      {/* taskbar */}
      <div className="h-[50px] shrink-0 bg-[#141414] flex items-stretch text-white">
        <div className="w-[61px] flex items-center justify-center">
          <svg width="21" height="21" viewBox="0 0 21 21" fill="#fff"><path d="M0 3L9 1.7V10H0ZM10 1.5L21 0V10H10ZM0 11H9V19.3L0 18ZM10 11H21V21L10 19.5Z" /></svg>
        </div>
        <div className="w-[57px] flex items-center justify-center">
          <svg width="22" height="24" viewBox="0 0 22 24"><circle cx="13" cy="9" r="7" fill="none" stroke="#fff" strokeWidth="1.4" /><path d="M8 14L1 23" stroke="#fff" strokeWidth="1.4" /></svg>
        </div>
        <div className="flex ml-[4px]">
          {taskIcons.map((ic, i) => (
            <div key={i} className={(taskSpecial.includes(i) ? "bg-[#2d2d2d] " : "") + "w-[62px] relative flex items-center justify-center"}>
              {ic}
              {underlined.includes(i) && <div className="absolute bottom-0 left-[5px] right-[5px] h-[3px] bg-[#9a9a9a]" />}
            </div>
          ))}
        </div>
        <div className="ml-auto flex items-center">
          <svg width="16" height="9" viewBox="0 0 16 9"><path d="M1 8L8 1L15 8" fill="none" stroke="#fff" strokeWidth="1.2" /></svg>
          <span className="ml-[15px] text-[14px] text-[#5fc01c] font-['Open_Sans',sans-serif]">47</span>
          <svg width="20" height="22" viewBox="0 0 20 22" className="ml-[11px]"><circle cx="9" cy="10" r="8" fill="#f0c020" /><circle cx="9" cy="10" r="5" fill="#fff" /><path d="M6 9L9 13L12 5" stroke="#222" fill="none" strokeWidth="1.6" /><circle cx="14" cy="16" r="5" fill="#2a9a40" /><path d="M12 16L14 18L17 14" stroke="#fff" fill="none" /></svg>
          <svg width="20" height="14" viewBox="0 0 20 14" className="ml-[11px]"><rect x="4" y="2" width="15" height="10" fill="#f0f0f0" stroke="#fff" /><path d="M0 1H3V6H0Z" fill="#fff" /></svg>
          <svg width="18" height="16" viewBox="0 0 18 16" className="ml-[12px]"><path d="M1 14Q3 4 14 1M5 14Q7 8 14 5M9 14Q10 11 14 9" stroke="#ddd" fill="none" /><circle cx="13" cy="14" r="1.2" fill="#fff" /></svg>
          <svg width="20" height="16" viewBox="0 0 20 16" className="ml-[10px]"><path d="M1 5H4L9 1V15L4 11H1Z" fill="none" stroke="#eee" /><path d="M12 4Q14 8 12 12M15 2Q18 8 15 14" stroke="#eee" fill="none" /></svg>
          <div className="ml-[20px] w-[80px] flex flex-col items-center text-[14.5px] leading-[23px] font-['Open_Sans',sans-serif] text-[#f0f0f0] whitespace-nowrap">
            <span>19:27</span><span>27/10/2018</span>
          </div>
          <svg width="20" height="20" viewBox="0 0 20 20" className="ml-[13px] mr-[30px]"><path d="M.5.5H19.5V16H13L10 19L7 16H.5Z" fill="none" stroke="#fff" /></svg>
        </div>
      </div>
    </div>
  );
}
